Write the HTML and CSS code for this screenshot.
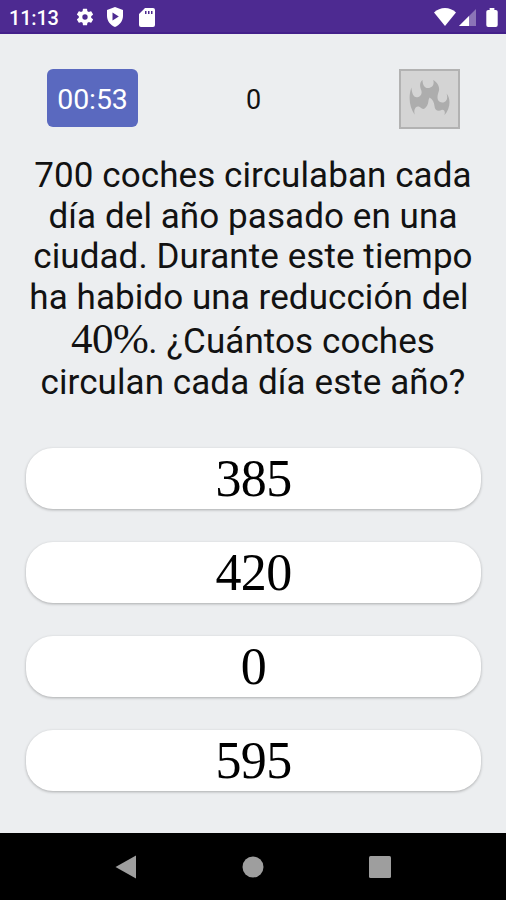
FILE: index.html
```html
<!DOCTYPE html>
<html lang="es">
<head>
<meta charset="UTF-8" />
<meta name="viewport" content="width=device-width, initial-scale=1.0">
<title>Quiz de matemáticas</title>
<link rel="stylesheet" href="styles.css">
</head>
<body>

<header class="status-bar">
  <span class="clock">11:13</span>
  <svg class="icon-gear" width="20" height="20" viewBox="0 0 24 24"><path fill="#fff" fill-rule="evenodd" d="M19.4 13a7.500 7.500 0 0 0 0-2l2.100-1.600a.5.5 0 0 0 .1-.6l-2-3.500a.5.5 0 0 0-.6-.2l-2.500 1a7.300 7.300 0 0 0-1.700-1L14.500 2.400a.5.5 0 0 0-.5-.4h-4a.5.5 0 0 0-.5.4l-.4 2.700a7.700 7.700 0 0 0-1.700 1l-2.400-1a.5.5 0 0 0-.6.2l-2 3.500a.5.5 0 0 0 .1.6L4.600 11a7.900 7.900 0 0 0 0 2l-2.100 1.600a.5.5 0 0 0-.1.6l2 3.500c.1.2.4.3.6.2l2.500-1c.5.4 1.100.7 1.700 1l.3 2.700c0 .2.300.4.500.4h4c.3 0 .5-.2.500-.4l.4-2.700a7.300 7.300 0 0 0 1.700-1l2.400 1c.2.1.5 0 .6-.2l2-3.500a.5.5 0 0 0-.1-.6zM12 15.200a3.200 3.200 0 1 1 0-6.400 3.200 3.200 0 0 1 0 6.400z"/></svg>
  <svg class="icon-shield" width="18" height="20" viewBox="0 0 18 20"><path fill="#fff" fill-rule="evenodd" d="M9 0 17 3V9C17 14 13.500 18 9 20 4.500 18 1 14 1 9V3zM6.500 5.500V13.500L12.800 9.500z"/></svg>
  <svg class="icon-card" width="16" height="19" viewBox="0 0 16 19"><path fill="#fff" fill-rule="evenodd" d="M6 0H14Q16 0 16 2V17Q16 19 14 19H2Q0 19 0 17V6zM6 3V6H7.500V3zM9 3V6H10.500V3zM12 3V6H13.500V3z"/></svg>
  <svg class="icon-wifi" width="22" height="18" viewBox="0 0 22 18"><path fill="#fff" d="M11 18 0 4.500C6-1.500 16-1.500 22 4.500z"/></svg>
  <svg class="icon-signal" width="17" height="17" viewBox="0 0 17 17"><path fill="#fff" fill-opacity=".35" d="M17 0V17H0z"/><path fill="#fff" d="M10 7V17H0z"/></svg>
  <svg class="icon-battery" width="12" height="19" viewBox="0 0 12 20"><path fill="#fff" d="M3.500 0h5v2H10q2 0 2 2v14q0 2-2 2H2q-2 0-2-2V4q0-2 2-2h1.500z"/></svg>
</header>

<main class="quiz">
  <div class="top-row">
    <div class="timer">00:53</div>
    <div class="score">0</div>
    <div class="streak">
      <svg width="41" height="37" viewBox="88 70 122 110"><path fill="#adadad" d="M105 176C90 156 85 125 95 95 97 112 101 126 113 124 124 122 129 112 123 100 119 88 121 79 128 73 129 88 134 97 144 97 158 97 164 86 160 73 172 80 180 92 177 105 174 116 171 123 174 132 178 141 190 143 197 136 203 130 202 122 200 113 214 130 210 160 193 178 197 168 193 160 185 162 174 168 164 162 164 151 163 140 158 129 149 125 144 134 147 141 142 149 136 158 132 162 125 157 119 152 113 150 108 155 103 161 103 167 105 176z"/></svg>
    </div>
  </div>

  <p class="question">
    <span class="line line-1">700 coches circulaban cada</span>
    <span class="line line-2">día del año pasado en una</span>
    <span class="line line-3">ciudad. Durante este tiempo</span>
    <span class="line line-4">ha habido una reducción del</span>
    <span class="line line-5"><span class="math">40%</span>. ¿Cuántos coches</span>
    <span class="line line-6">circulan cada día este año?</span>
  </p>

  <div class="answers">
    <button>385</button>
    <button>420</button>
    <button>0</button>
    <button>595</button>
  </div>
</main>

<nav class="nav-bar">
  <svg width="22" height="24" viewBox="0 0 22 24"><path fill="#9e9e9e" d="M21 .5V23.500L.5 12z"/></svg>
  <svg width="22" height="22" viewBox="0 0 22 22"><circle cx="11" cy="11" r="10.500" fill="#9e9e9e"/></svg>
  <svg width="22" height="22" viewBox="0 0 22 22"><rect width="22" height="22" rx="1.500" fill="#9e9e9e"/></svg>
</nav>

</body>
</html>
```
FILE: styles.css
```css
* {
  box-sizing: border-box;
}
body {
  margin: 0;
  height: 900px;
  display: flex;
  flex-direction: column;
  overflow: hidden;
  font-family: Roboto, sans-serif;
  background: #eceef0;
  color: #121212;
}
svg {
  display: block;
  flex: none;
}

.status-bar {
  height: 34px;
  display: flex;
  align-items: center;
  padding: 0 8px 0 9px;
  background: #4d2a91;
  border-bottom: 2px solid #43208a;
  color: #fff;
}
.clock {
  width: 66px;
  font-size: 20px;
  font-weight: 500;
  line-height: 32px;
  letter-spacing: -0.2px;
  padding-top: 3px;
}
.icon-gear {
  margin-top: 2px;
}
.icon-shield {
  margin: 2px 0 0 11px;
}
.icon-card {
  margin: 2px 0 0 15px;
}
.icon-wifi {
  margin: 1px 0 0 auto;
}
.icon-signal {
  margin: 3px 0 0 3px;
}
.icon-battery {
  margin: 2px 0 0 10px;
}

.quiz {
  flex: 1;
}
.top-row {
  display: grid;
  grid-template-columns: 91px 1fr 91px;
  align-items: center;
  padding: 34px 46px 0 47px;
}
.timer {
  height: 58px;
  margin-bottom: 2px;
  border-radius: 6px;
  background: #5a69bf;
  color: #fff;
  font-size: 28.500px;
  line-height: 61px;
  letter-spacing: -0.1px;
  text-align: center;
}
.score {
  font-size: 27px;
  line-height: 60px;
  padding-top: 2px;
  text-align: center;
}
.streak {
  width: 61px;
  height: 60px;
  justify-self: end;
  display: flex;
  align-items: center;
  justify-content: center;
  background: #d4d4d4;
  border: 2px solid #b2b2b2;
}
.streak svg {
  margin-bottom: 4px;
}

.question {
  margin: 25px 0 0;
  font-size: 35px;
  text-align: center;
}
.line {
  display: block;
  height: 40.700px;
  line-height: 42px;
  white-space: nowrap;
  letter-spacing: 0.08px;
}
.line-4 {
  padding-right: 8px;
}
.line-5 {
  height: 44px;
  line-height: 41px;
}
.math {
  font-family: "Liberation Serif", serif;
  font-size: 43px;
  letter-spacing: -0.5px;
}

.answers {
  display: flex;
  flex-direction: column;
  gap: 32.700px;
  padding: 0 25px 0 26px;
  margin-top: 46px;
}
.answers button {
  height: 61px;
  padding: 0;
  border: none;
  border-radius: 27px;
  background: #fff;
  color: #000;
  font-family: "Liberation Serif", serif;
  font-size: 52px;
  line-height: 59px;
  letter-spacing: -0.7px;
  box-shadow: 0 1px 3px rgba(0, 0, 0, 0.28);
}

.nav-bar {
  height: 67px;
  display: flex;
  align-items: center;
  justify-content: space-between;
  padding: 0 115px;
  background: #000;
}
```
